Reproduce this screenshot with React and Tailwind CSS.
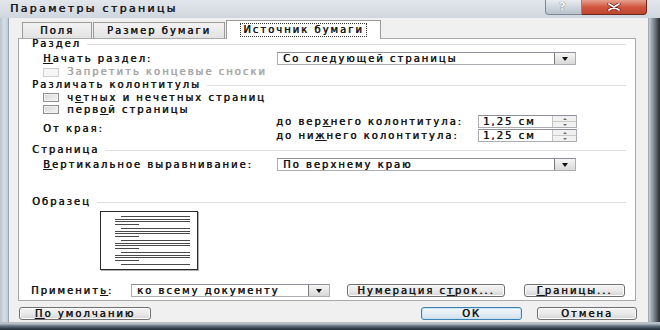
import React from 'react';

const U = ({ children }) => <span className="underline underline-offset-[1px]">{children}</span>;

const Heading = ({ title, className }) => (
    <div className={`flex items-center pl-[13px] pr-[9px] ${className}`}>
        <span className="leading-none">{title}</span>
        <div className="ml-[6px] h-px flex-1 bg-[#dedede]" />
    </div>
);

const Check = ({ disabled }) => (
    <span
        className={`block w-[16px] h-[9px] border ${disabled
            ? 'border-[#cfcfcf] bg-[#f6f6f6]'
            : 'border-[#8f8f8f] bg-linear-to-br from-[#d4d4d4] to-[#f7f7f7] shadow-[inset_0_0_0_1px_#f2f2f2]'
            }`}
    />
);

const Arrow = () => (
    <span className="w-0 h-0 border-l-[3.5px] border-r-[3.5px] border-t-[4px] border-l-transparent border-r-transparent border-t-[#111]" />
);

const Select = ({ value, className }) => (
    <div className={`flex items-stretch border border-[#abadb3] border-t-[#8e9098] bg-white ${className}`}>
        <span className="flex-1 pl-[5px] flex items-center leading-none whitespace-nowrap overflow-hidden">{value}</span>
        <span className="w-[21px] flex items-center justify-center border-l border-[#7a7a7a] bg-linear-to-b from-[#f6f6f6] to-[#d8d8d8]">
            <Arrow />
        </span>
    </div>
);

const Spin = ({ value }) => (
    <div className="flex w-[99px] h-[13px] border border-[#abadb3] border-t-[#8e9098] bg-white">
        <span className="flex-1 pl-[4px] flex items-center leading-none">{value}</span>
        <span className="w-[24px] flex flex-col border-l border-[#c3c3c3] bg-[#f1f1f1]">
            <span className="flex-1 flex items-center justify-center border-b border-[#c9c9c9]">
                <span className="w-0 h-0 border-l-[2.5px] border-r-[2.5px] border-b-[2px] border-l-transparent border-r-transparent border-b-[#6b6b6b]" />
            </span>
            <span className="flex-1 flex items-center justify-center">
                <span className="w-0 h-0 border-l-[2.5px] border-r-[2.5px] border-t-[2px] border-l-transparent border-r-transparent border-t-[#6b6b6b]" />
            </span>
        </span>
    </div>
);

const Btn = ({ children, className, primary }) => (
    <div
        className={`flex items-center justify-center leading-none rounded-[3px] border ${primary
            ? 'border-[#3c7fb1] bg-linear-to-b from-[#f4f9fc] via-[#e4eef5] to-[#d2e1ec] shadow-[inset_0_0_0_1px_#c7e5f7]'
            : 'border-[#707070] bg-linear-to-b from-[#f3f3f3] via-[#eaeaea] to-[#d5d5d5] shadow-[inset_0_0_0_1px_#fbfbfb]'
            } ${className}`}
    >
        {children}
    </div>
);

const Para = ({ last }) => (
    <div className="flex flex-col gap-[1.5px]">
        <div className="ml-[6px] h-px bg-[#4a4a4a]" />
        {!last && (
            <>
                <div className="h-px bg-[#4a4a4a]" />
                <div className="h-px bg-[#4a4a4a]" />
                <div className="w-[24px] h-px bg-[#4a4a4a]" />
            </>
        )}
    </div>
);

const App = () => {
    return (
        <div className="w-[660px] h-[330px] flex flex-col overflow-hidden bg-[#cdd6df] font-['DejaVu_Sans',sans-serif] text-[10px] tracking-[2px] text-[#141414] [text-shadow:0.45px_0_0_currentColor]">
            {/* Title bar */}
            <div className="h-[18px] shrink-0 flex bg-linear-to-b from-[#e3e7ec] to-[#cfd6de]">
                <div className="pl-[10px] pt-[3px] text-[11px] leading-none tracking-[2.3px] text-[#1a1a1a]">Параметры страницы</div>
                <div className="ml-auto mr-[13px] flex h-[15px]">
                    <div className="w-[37px] flex items-center justify-center rounded-bl-[4px] border border-t-0 border-[#7d8894] bg-linear-to-b from-[#e9edf1] via-[#cfd6de] to-[#b9c3cd] text-[11px] font-bold text-white [text-shadow:0_0_1px_#333]">?</div>
                    <div className="w-[65px] flex items-center justify-center rounded-br-[4px] border border-t-0 border-l-0 border-[#6a2a20] bg-linear-to-b from-[#e5a08f] via-[#d2563f] to-[#c0462f]">
                        <svg width="16" height="8" viewBox="0 0 16 8">
                            <path d="M3 1 L13 7 M13 1 L3 7" stroke="#5a1b12" strokeWidth="3.2" strokeLinecap="round" />
                            <path d="M3 1 L13 7 M13 1 L3 7" stroke="#ffffff" strokeWidth="1.8" strokeLinecap="round" />
                        </svg>
                    </div>
                </div>
            </div>

            <div className="flex flex-1 min-h-0">
                {/* left frame */}
                <div className="w-[9px] bg-linear-to-r from-[#b9c3ce] via-[#d7dee6] to-[#c4ccd5] border-r border-[#9aa6b2]" />

                {/* Client area */}
                <div className="flex-1 flex flex-col bg-[#f0f0f0]">
                    {/* Tabs */}
                    <div className="relative z-10 mt-[2px] -mb-px h-[19px] flex items-end gap-px ml-[13px]">
                        <div className="mb-px w-[70px] h-[16px] flex items-center justify-center border border-b-0 border-[#9a9a9a] bg-linear-to-b from-[#f3f3f3] to-[#e3e3e3] leading-none">Поля</div>
                        <div className="mb-px w-[132px] h-[16px] flex items-center justify-center border border-b-0 border-[#9a9a9a] bg-linear-to-b from-[#f3f3f3] to-[#e3e3e3] leading-none">Размер бумаги</div>
                        <div className="w-[155px] h-[19px] flex items-center justify-center border border-b-0 border-[#9a9a9a] bg-white">
                            <span className="px-[2px] py-[1px] leading-none border border-dotted border-[#333]">Источник бумаги</span>
                        </div>
                    </div>

                    {/* Panel */}
                    <div className="ml-[9px] mr-[12px] h-[263px] shrink-0 flex flex-col border border-[#a9a9a9] bg-white">
                        <Heading title="Раздел" className="h-[10px]" />

                        <div className="mt-[3px] h-[13px] flex items-center pl-[24px]">
                            <span className="w-[234px] leading-none"><U>Н</U>ачать раздел:</span>
                            <Select value="Со следующей страницы" className="w-[299px] h-[13px]" />
                        </div>

                        <div className="h-[14px] flex items-center pl-[24px] text-[#a6a6a6]">
                            <Check disabled />
                            <span className="ml-[8px] leading-none">Запретить концевые сноски</span>
                        </div>

                        <Heading title="Различать колонтитулы" className="h-[12px]" />

                        <div className="h-[13px] flex items-center pl-[24px]">
                            <Check />
                            <span className="ml-[8px] leading-none">ч<U>е</U>тных и нечетных страниц</span>
                        </div>
                        <div className="h-[11px] flex items-center pl-[24px]">
                            <Check />
                            <span className="ml-[8px] leading-none">перв<U>о</U>й страницы</span>
                        </div>

                        <div className="h-[27px] flex items-center pl-[24px]">
                            <span className="w-[233px] leading-none">От края:</span>
                            <div className="flex flex-col gap-px">
                                <div className="flex items-center">
                                    <span className="w-[202px] leading-none">до вер<U>х</U>него колонтитула:</span>
                                    <Spin value="1,25 см" />
                                </div>
                                <div className="flex items-center">
                                    <span className="w-[202px] leading-none">до ни<U>ж</U>него колонтитула:</span>
                                    <Spin value="1,25 см" />
                                </div>
                            </div>
                        </div>

                        <Heading title="Страница" className="mt-[2px] h-[12px]" />

                        <div className="mt-[2px] h-[13px] flex items-center pl-[24px]">
                            <span className="w-[234px] leading-none"><U>В</U>ертикальное выравнивание:</span>
                            <Select value="По верхнему краю" className="w-[299px] h-[13px]" />
                        </div>

                        <Heading title="Образец" className="mt-[25px] h-[12px]" />

                        <div className="mt-[3px] ml-[81px] w-[98px] h-[59px] flex flex-col gap-[3.5px] pt-[4px] pl-[14px] pr-[7px] border border-[#2a2a2a] bg-white shadow-[1px_1px_0_#b0b0b0]">
                            <Para />
                            <Para />
                            <Para />
                            <Para />
                            <Para last />
                        </div>

                        <div className="mt-[14px] h-[13px] flex items-center pl-[12px]">
                            <span className="w-[100px] leading-none">Применит<U>ь</U>:</span>
                            <Select value="ко всему документу" className="w-[199px] h-[13px]" />
                            <Btn className="ml-[17px] w-[158px] h-[13px]">Нумерация с<U>т</U>рок...</Btn>
                            <Btn className="ml-[19px] w-[101px] h-[13px]"><U>Г</U>раницы...</Btn>
                        </div>
                    </div>

                    {/* Bottom buttons */}
                    <div className="mt-[6px] h-[13px] flex ml-[10px] mr-[11px]">
                        <Btn className="w-[132px]"><U>П</U>о умолчанию</Btn>
                        <Btn primary className="ml-auto w-[101px]">ОК</Btn>
                        <Btn className="ml-[15px] w-[100px]">Отмена</Btn>
                    </div>
                </div>

                {/* right frame */}
                <div className="w-[12px] border-l border-[#a3aab2] bg-linear-to-r from-[#c8ced4] via-[#767d85] to-[#262b31]" />
            </div>

            {/* bottom frame */}
            <div className="h-[8px] shrink-0 border-t border-[#b7c0c9] bg-linear-to-b from-[#c9d1d9] via-[#5b6774] to-[#1b2633]" />
        </div>
    );
};

export default App;
